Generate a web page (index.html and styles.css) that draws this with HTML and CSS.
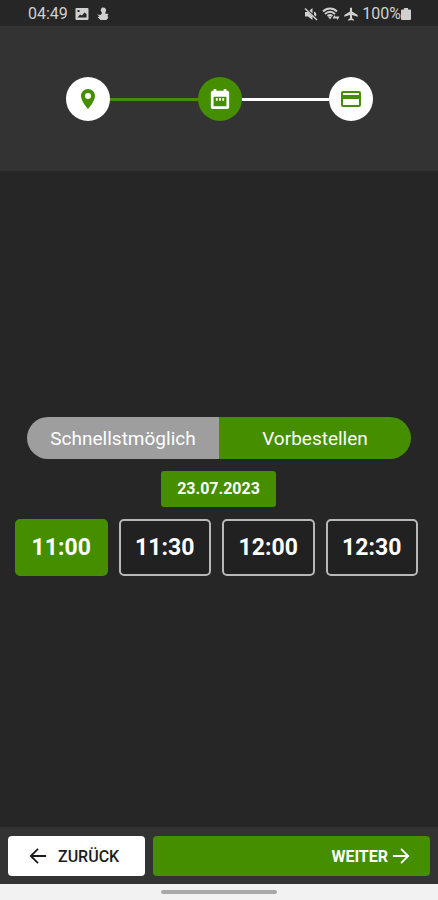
FILE: index.html
```html
<!DOCTYPE html>
<html lang="de">
<head>
<meta charset="utf-8">
<meta name="viewport" content="width=device-width, initial-scale=1">
<title>Vorbestellen</title>
<link rel="stylesheet" href="styles.css">
</head>
<body>
<div class="status">
  <div class="status-group">
    <span>04:49</span>
    <svg viewBox="0 0 14 14"><path fill-rule="evenodd" d="M1.500 1h11a1 1 0 0 1 1 1v10a1 1 0 0 1-1 1h-11a1 1 0 0 1-1-1V2a1 1 0 0 1 1-1zM2.500 10.500h9V7L9.500 5.500 7 8.500 5 7.500zM2.500 3v2h2V3z"/></svg>
    <svg viewBox="0 0 14 14"><path d="M6 .5c3-.5 4.500 1.500 4 3.500L9 6.500l3.500.5-1 2 1 1.500-2 2.500H4.500L1.500 10l2-.5L1 7.500l3.500.5L6 6 4.500 3z"/></svg>
  </div>
  <div class="status-group status-right">
    <svg viewBox="0 0 14 14"><path d="M1 5v4.500h3L8.500 13V9.500L4 5zM8.500 1 5.500 3.500l3 3zM10 4.500V8l2 1.500c1-2 0-4.500-2-5z"/><path d="m1 1.500 12 11.500" fill="none" stroke="currentColor" stroke-width="1.500"/></svg>
    <svg class="status-wifi" viewBox="0 0 18 14"><g fill="none" stroke="currentColor" stroke-width="1.800"><path d="M1 4.500c4-4 10-4 14 0M3 7c3-3 7-3 10 0M5.500 9q2.500-2 5 0"/></g><path d="M6 9.500h4l-2 3zM10.500 11.500l2-3.500 2 3.500zM13.500 9.500h4l-2 3.500z"/></svg>
    <svg viewBox="3 2 20 20"><path d="M22.500 16v-2.500l-8-5V3.500a2 2 0 0 0-3 0v5l-8 5V16l8-2.500V18l-2.500 2v1.500l4-1 4 1V20l-2.500-2v-4.500z"/></svg>
    <span class="battery">100%<svg class="battery-icon" viewBox="0 0 10 14"><path d="M3 1h4v1.500h2q1 0 1 1V12q0 1-1 1H1q-1 0-1-1V3.500q0-1 1-1h2z"/></svg></span>
  </div>
</div>

<header class="header">
  <ol class="steps">
    <li class="step" aria-label="Adresse"><svg viewBox="0 0 24 24"><path d="M12 2C8.130 2 5 5.130 5 9c0 5.250 7 13 7 13s7-7.750 7-13c0-3.870-3.130-7-7-7zm0 10a3 3 0 1 1 0-6 3 3 0 0 1 0 6z"/></svg></li>
    <li class="line line-done" aria-hidden="true"></li>
    <li class="step step-current" aria-label="Zeit" aria-current="step"><svg viewBox="0 0 24 24"><path fill-rule="evenodd" d="M20 3h-1V1h-3v2H8V1H5v2H4a2 2 0 0 0-2 2v16a2 2 0 0 0 2 2h16a2 2 0 0 0 2-2V5a2 2 0 0 0-2-2zM5 9.500h14V20H5z"/><path d="M7.500 11h2v3h-2zM11 11h2v3h-2zM14.500 11h2v3h-2z"/></svg></li>
    <li class="line" aria-hidden="true"></li>
    <li class="step" aria-label="Zahlung"><svg viewBox="0 0 24 24"><path d="M20 4H4c-1.110 0-2 .89-2 2v12c0 1.110.89 2 2 2h16c1.110 0 2-.89 2-2V6c0-1.110-.89-2-2-2zm0 14H4v-6h16zm0-10H4V6h16z"/></svg></li>
  </ol>
</header>

<main class="content">
  <div class="toggle">
    <button type="button" class="toggle-option">Schnellstmöglich</button>
    <button type="button" class="toggle-option toggle-active">Vorbestellen</button>
  </div>
  <button type="button" class="date">23.07.2023</button>
  <div class="slots">
    <button type="button" class="slot slot-active">11:00</button>
    <button type="button" class="slot">11:30</button>
    <button type="button" class="slot">12:00</button>
    <button type="button" class="slot">12:30</button>
  </div>
</main>

<footer class="actions">
  <button type="button" class="action back"><svg viewBox="0 0 20 20"><path d="M19 10H2M10 2l-8 8 8 8"/></svg>ZURÜCK</button>
  <button type="button" class="action next">WEITER<svg viewBox="0 0 20 20"><path d="M1 10h17M10 2l8 8-8 8"/></svg></button>
</footer>
<div class="gesture"><div class="gesture-bar"></div></div>
</body>
</html>
```

FILE: styles.css
```css
:root {
  --green: #458e00;
  --dark: #262626;
  --panel: #333333;
}

* {
  box-sizing: border-box;
}

body {
  margin: 0;
  min-height: 100vh;
  display: flex;
  flex-direction: column;
  background: var(--dark);
  color: #ffffff;
  font-family: Roboto, "Liberation Sans", sans-serif;
}

button {
  font: inherit;
  color: inherit;
  border: 0;
  padding: 0;
  cursor: pointer;
}

svg {
  display: block;
  flex: none;
  fill: currentColor;
}

.status {
  display: flex;
  justify-content: space-between;
  height: 26px;
  padding: 0 27px 0 28px;
  color: #d0d0d0;
  font-size: 16px;
  line-height: 28px;
}

.status-group {
  display: flex;
  align-items: center;
  gap: 7px;
  height: 28px;
}

.status-group svg {
  width: 14px;
  height: 14px;
}

.status-right {
  gap: 4px;
}

.status-group .status-wifi {
  width: 18px;
}

.battery {
  display: flex;
  align-items: center;
}

.status-group .battery-icon {
  width: 10px;
}

.header {
  padding: 51px 65px 50px 66px;
  background: var(--panel);
}

.steps {
  display: flex;
  align-items: center;
  margin: 0;
  padding: 0;
  list-style: none;
}

.step {
  display: grid;
  place-items: center;
  width: 44px;
  height: 44px;
  border-radius: 50%;
  background: #ffffff;
  color: var(--green);
}

.step svg {
  width: 24px;
  height: 24px;
}

.step-current {
  background: var(--green);
  color: #ffffff;
}

.step-current svg {
  width: 22px;
  height: 22px;
}

.line {
  flex: 1;
  height: 3px;
  background: #ffffff;
}

.line-done {
  background: var(--green);
}

.content {
  flex: 1;
  display: flex;
  flex-direction: column;
  align-items: center;
  justify-content: center;
  gap: 12px;
  padding: 0 20px 6px 15px;
}

.toggle {
  align-self: stretch;
  display: flex;
  height: 42px;
  margin: 0 7px 0 12px;
  border-radius: 21px;
  overflow: hidden;
  font-size: 19px;
}

.toggle-option {
  flex: 1;
  padding-top: 1px;
  background: #9e9e9e;
}

.toggle-active {
  background: var(--green);
}

.date {
  height: 36px;
  margin-left: 4px;
  padding: 0 16px;
  border-radius: 3px;
  background: var(--green);
  font-size: 16px;
  font-weight: 700;
}

.slots {
  align-self: stretch;
  display: grid;
  grid-template-columns: repeat(4, 1fr);
  gap: 11px;
}

.slot {
  height: 57px;
  border: 2px solid #b8b8b8;
  border-radius: 5px;
  background: #212121;
  font-size: 23px;
  font-weight: 700;
}

.slot-active {
  border-color: var(--green);
  background: var(--green);
}

.actions {
  display: grid;
  grid-template-columns: 137fr 277fr;
  gap: 8px;
  padding: 9px 8px 8px;
  background: var(--panel);
}

.action {
  display: flex;
  align-items: center;
  height: 40px;
  border-radius: 4px;
  font-size: 16px;
}

.action svg {
  width: 18px;
  height: 18px;
  fill: none;
  stroke: currentColor;
  stroke-width: 2;
}

.back {
  gap: 11px;
  padding-left: 21px;
  background: #ffffff;
  color: #1c1c1c;
  font-weight: 500;
}

.next {
  justify-content: flex-end;
  gap: 4px;
  padding-right: 20px;
  background: var(--green);
  font-weight: 700;
}

.gesture {
  display: flex;
  justify-content: center;
  align-items: center;
  height: 16px;
  background: #f2f2f2;
}

.gesture-bar {
  width: 116px;
  height: 4px;
  border-radius: 2px;
  background: #a8a8a8;
}
```
